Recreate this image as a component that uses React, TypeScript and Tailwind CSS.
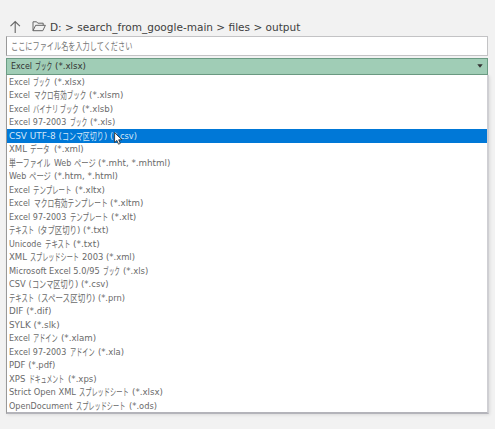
import { useLayoutEffect, useRef } from 'react';

// A run of text: content, left edge and right edge in thirds of a pixel.
type Run = [string, number, number];

const EXCEL: Run = ['Excel', 28, 91];
const EXCEL97: Run = ['Excel 97-2003', 28, 200];

const ROWS: Run[][] = [
  [EXCEL, ['ブック', 100, 152], ['(*.xlsx)', 161, 254]],
  [EXCEL, ['マクロ有効ブック', 101, 258], ['(*.xlsm)', 268, 371]],
  [EXCEL, ['バイナリ ブック', 100, 237], ['(*.xlsb)', 246, 339]],
  [EXCEL97, ['ブック', 210, 262], ['(*.xls)', 271, 347]],
  [['CSV UTF-8 (', 28, 187], ['コンマ区切り', 187, 312], [') (*.csv)', 312, 411]],
  [['XML', 28, 82], ['データ', 91, 150], ['(*.xml)', 161, 250]],
  [['単一ファイル', 28, 152], ['Web', 161, 213], ['ページ', 221, 286], ['(*.mht, *.mhtml)', 295, 512]],
  [['Web', 28, 80], ['ページ', 88, 154], ['(*.htm, *.html)', 163, 355]],
  [EXCEL, ['テンプレート', 100, 215], ['(*.xltx)', 225, 315]],
  [EXCEL, ['マクロ有効テンプレート', 101, 322], ['(*.xltm)', 331, 431]],
  [EXCEL97, ['テンプレート', 210, 324], ['(*.xlt)', 333, 409]],
  [['テキスト', 28, 103], ['(', 113, 121], ['タブ区切り', 121, 232], [') (*.txt)', 232, 327]],
  [['Unicode', 28, 125], ['テキスト', 134, 210], ['(*.txt)', 220, 300]],
  [['XML', 28, 82], ['スプレッドシート', 91, 238], ['2003 (*.xml)', 247, 406]],
  [['Microsoft Excel 5.0/95', 28, 300], ['ブック', 309, 360], ['(*.xls)', 370, 446]],
  [['CSV (', 28, 96], ['コンマ区切り', 97, 225], [') (*.csv)', 225, 326]],
  [['テキスト', 28, 103], ['(', 113, 121], ['スペース区切り', 122, 277], [') (*.prn)', 277, 376]],
  [['DIF (*.dif)', 28, 155]],
  [['SYLK (*.slk)', 28, 180]],
  [EXCEL, ['アドイン', 100, 174], ['(*.xlam)', 184, 289]],
  [EXCEL97, ['アドイン', 210, 284], ['(*.xla)', 294, 372]],
  [['PDF (*.pdf)', 28, 167]],
  [['XPS', 28, 77], ['ドキュメント', 88, 193], ['(*.xps)', 203, 289]],
  [['Strict Open XML', 28, 229], ['スプレッドシート', 238, 387], ['(*.xlsx)', 396, 489]],
  [['OpenDocument', 28, 218], ['スプレッドシート', 228, 376], ['(*.ods)', 387, 471]],
];

const SELECTED = 4;

const isJapanese = (text: string) => /[\u3040-\u30ff\u4e00-\u9fff]/.test(text);

// Squeezes a run of text into a given width.
function Fit({ text, width, gap }: { text: string; width: number; gap: number }) {
  const ref = useRef<HTMLSpanElement>(null);
  useLayoutEffect(() => {
    const el = ref.current;
    if (!el) return;
    el.style.transform = 'none';
    el.style.transform = `scaleX(${width / el.getBoundingClientRect().width})`;
  }, [text, width]);
  return (
    <span className="block shrink-0" style={{ width, marginLeft: gap }}>
      <span
        ref={ref}
        className={`block w-max origin-left whitespace-pre ${isJapanese(text) ? "-translate-y-[0.75px] font-['Noto_Sans_CJK_JP',sans-serif] text-[10px]" : ''}`}
      >
        {text}
      </span>
    </span>
  );
}

function Line({ runs, start }: { runs: Run[]; start: number }) {
  return (
    <>
      {runs.map(([text, x0, x1], i) => (
        <Fit key={i} text={text} width={(x1 - x0) / 3} gap={(x0 - (i ? runs[i - 1][2] : start)) / 3} />
      ))}
    </>
  );
}

export default function App() {
  return (
    <div className="h-[429px] w-[495px] overflow-hidden bg-[#f2f2f2] pt-[17px] font-['DejaVu_Sans_Condensed','DejaVu_Sans','Noto_Sans_CJK_JP',sans-serif] text-[#444]">
      <div className="flex h-[19px] items-center pl-[9px] font-['DejaVu_Sans',sans-serif] text-[11px] leading-[21px] text-[#404040]">
        <svg width="12" height="14" viewBox="0 0 12 14" fill="none" stroke="#666" strokeWidth="1.1">
          <path d="M6.2 13V1.5M1.5 6.2 6.2 1.5l4.7 4.7" />
        </svg>
        <svg className="ml-[11px]" width="14" height="12" viewBox="0 0 14 12" fill="none" stroke="#666" strokeWidth="1">
          <path d="M1 9.7V.8h3.6l1.2 1.4h5.4v2M1 9.7 3.6 4.3h9.8l-2.6 5.4z" />
        </svg>
        <div className="flex pt-[2px]">
          <Line start={138} runs={[['D: > search_from_google-main > files > output', 151, 902]]} />
        </div>
      </div>

      <div className="ml-[6px] flex h-[20px] w-[482px] items-center border border-[#c3c3c5] border-l-[#999] bg-white pt-px leading-[18px] text-[#777]">
        <Line start={21} runs={[['ここにファイル名を入力してください', 32, 396]]} />
      </div>

      <div className="mt-[2px] ml-[6px] flex h-[17px] w-[482px] items-center border border-[#6c9c84] bg-[#a0cdb6] text-[9px] leading-[15px] text-[#333]">
        <div className="flex">
          <Line start={21} runs={[['Excel', 33, 96], ['ブック', 105, 157], ['(*.xlsx)', 165, 258]]} />
        </div>
        <svg className="mr-[4px] mb-px ml-auto" width="6" height="4" viewBox="0 0 6 4">
          <path d="M.3.3h5.4L3 3.7z" fill="#333" />
        </svg>
      </div>

      <div className="ml-[6px] h-[338.5px] w-[483px] border-r-2 border-b-2 border-l border-r-[#cfcfd3] border-b-[#b4b4ba] border-l-[#999] bg-white pt-[0.25px] shadow-[1px_1px_3px_#00000018]">
        {ROWS.map((runs, i) => (
          <div
            key={i}
            className={`relative flex h-[13.5px] items-center pt-px text-[9px] leading-[13.5px] ${i === SELECTED ? 'bg-[#0078d7] text-[#d3e7f8]' : 'text-[#6a6a6a]'}`}
          >
            <Line start={21} runs={runs} />
            {i === SELECTED && (
              <svg className="absolute top-[3px] left-[107px]" width="9" height="13" viewBox="0 0 9 13">
                <path d="M.6.7v9.8l2.3-2.1 1.6 3.8 1.8-.8-1.6-3.6h3.2z" fill="#fff" stroke="#222" strokeWidth=".8" />
              </svg>
            )}
          </div>
        ))}
      </div>
    </div>
  );
}
